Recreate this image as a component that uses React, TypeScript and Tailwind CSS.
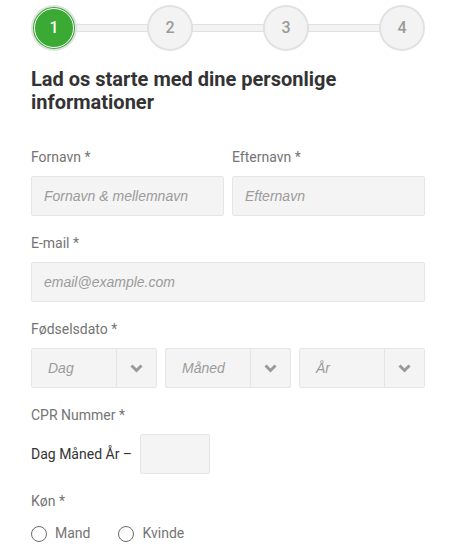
import React from "react";

const roboto = { fontFamily: "Roboto, 'Liberation Sans', sans-serif" };

function Step({ n, active }: { n: number; active?: boolean }) {
  return (
    <div
      className={
        "w-[46px] h-[46px] rounded-full border-[2px] flex items-center justify-center shrink-0 text-[16px] font-medium " +
        (active
          ? "border-[#e2e2e2] bg-[#3aaa35] text-white"
          : "border-[#e2e2e2] bg-[#f3f3f3] text-[#9a9a9a]")
      }
    >
      {active ? (
        <div className="w-[40px] h-[40px] rounded-full bg-[#3aaa35] border border-white flex items-center justify-center">
          {n}
        </div>
      ) : (
        n
      )}
    </div>
  );
}

function Line() {
  return <div className="flex-1 h-[8px] -mx-[1px] border border-[#e0e0e0] bg-[#f3f3f3]" />;
}

function Label({ children }: { children: React.ReactNode }) {
  return <div className="text-[14px] leading-[20px] text-[#747474]">{children}</div>;
}

function Input({ placeholder, className }: { placeholder: string; className?: string }) {
  return (
    <div
      className={
        "h-[40px] bg-[#f4f4f4] border border-[#e6e6e6] rounded-[2px] flex items-center pl-[12px] text-[14px] italic text-[#9b9b9b] " +
        (className || "")
      }
      style={{ fontFamily: "'Liberation Sans', Arial, sans-serif" }}
    >
      {placeholder}
    </div>
  );
}

function Chevron() {
  return (
    <svg width="13" height="9" viewBox="0 0 13 9">
      <path d="M1.5 1.5 L6.5 6.5 L11.5 1.5" fill="none" stroke="#9a9a9a" strokeWidth="3" strokeLinecap="butt" strokeLinejoin="miter" />
    </svg>
  );
}

function Select({ placeholder }: { placeholder: string }) {
  return (
    <div className="flex-1 h-[40px] bg-[#f4f4f4] border border-[#e6e6e6] rounded-[2px] flex">
      <div
        className="flex-1 flex items-center pl-[16px] text-[14px] italic text-[#9b9b9b]"
        style={{ fontFamily: "'Liberation Sans', Arial, sans-serif" }}
      >
        {placeholder}
      </div>
      <div className="w-[40px] border-l border-[#e6e6e6] flex items-center justify-center">
        <Chevron />
      </div>
    </div>
  );
}

function Radio({ label }: { label: string }) {
  return (
    <div className="flex items-center gap-[8px]">
      <div className="w-[16px] h-[16px] rounded-full border border-[#6a6a6a] bg-white" />
      <span className="text-[14px] text-[#747474]">{label}</span>
    </div>
  );
}

export default function App() {
  return (
    <div className="bg-white w-[454px] h-[550px] overflow-hidden" style={roboto}>
      <div className="ml-[31px] w-[394px] pt-[5px]">
        <div className="flex items-center">
          <Step n={1} active />
          <Line />
          <Step n={2} />
          <Line />
          <Step n={3} />
          <Line />
          <Step n={4} />
        </div>

        <h1 className="mt-[17px] text-[20px] leading-[23px] font-bold text-[#333333]">
          Lad os starte med dine personlige informationer
        </h1>

        <div className="mt-[33px] flex gap-[8px]">
          <div className="flex-1">
            <Label>Fornavn *</Label>
            <Input className="mt-[9px]" placeholder="Fornavn & mellemnavn" />
          </div>
          <div className="flex-1">
            <Label>Efternavn *</Label>
            <Input className="mt-[9px]" placeholder="Efternavn" />
          </div>
        </div>

        <div className="mt-[17px]">
          <Label>E-mail *</Label>
          <Input className="mt-[9px]" placeholder="email@example.com" />
        </div>

        <div className="mt-[17px]">
          <Label>Fødselsdato *</Label>
          <div className="mt-[9px] flex gap-[8px]">
            <Select placeholder="Dag" />
            <Select placeholder="Måned" />
            <Select placeholder="År" />
          </div>
        </div>

        <div className="mt-[17px]">
          <Label>CPR Nummer *</Label>
          <div className="mt-[9px] flex items-center">
            <span className="text-[14px] text-[#333333]">Dag Måned År –</span>
            <div className="ml-[8px] w-[70px] h-[40px] bg-[#f4f4f4] border border-[#e6e6e6] rounded-[2px]" />
          </div>
        </div>

        <div className="mt-[17px]">
          <Label>Køn *</Label>
          <div className="mt-[12px] flex items-center gap-[28px]">
            <Radio label="Mand" />
            <Radio label="Kvinde" />
          </div>
        </div>
      </div>
    </div>
  );
}
